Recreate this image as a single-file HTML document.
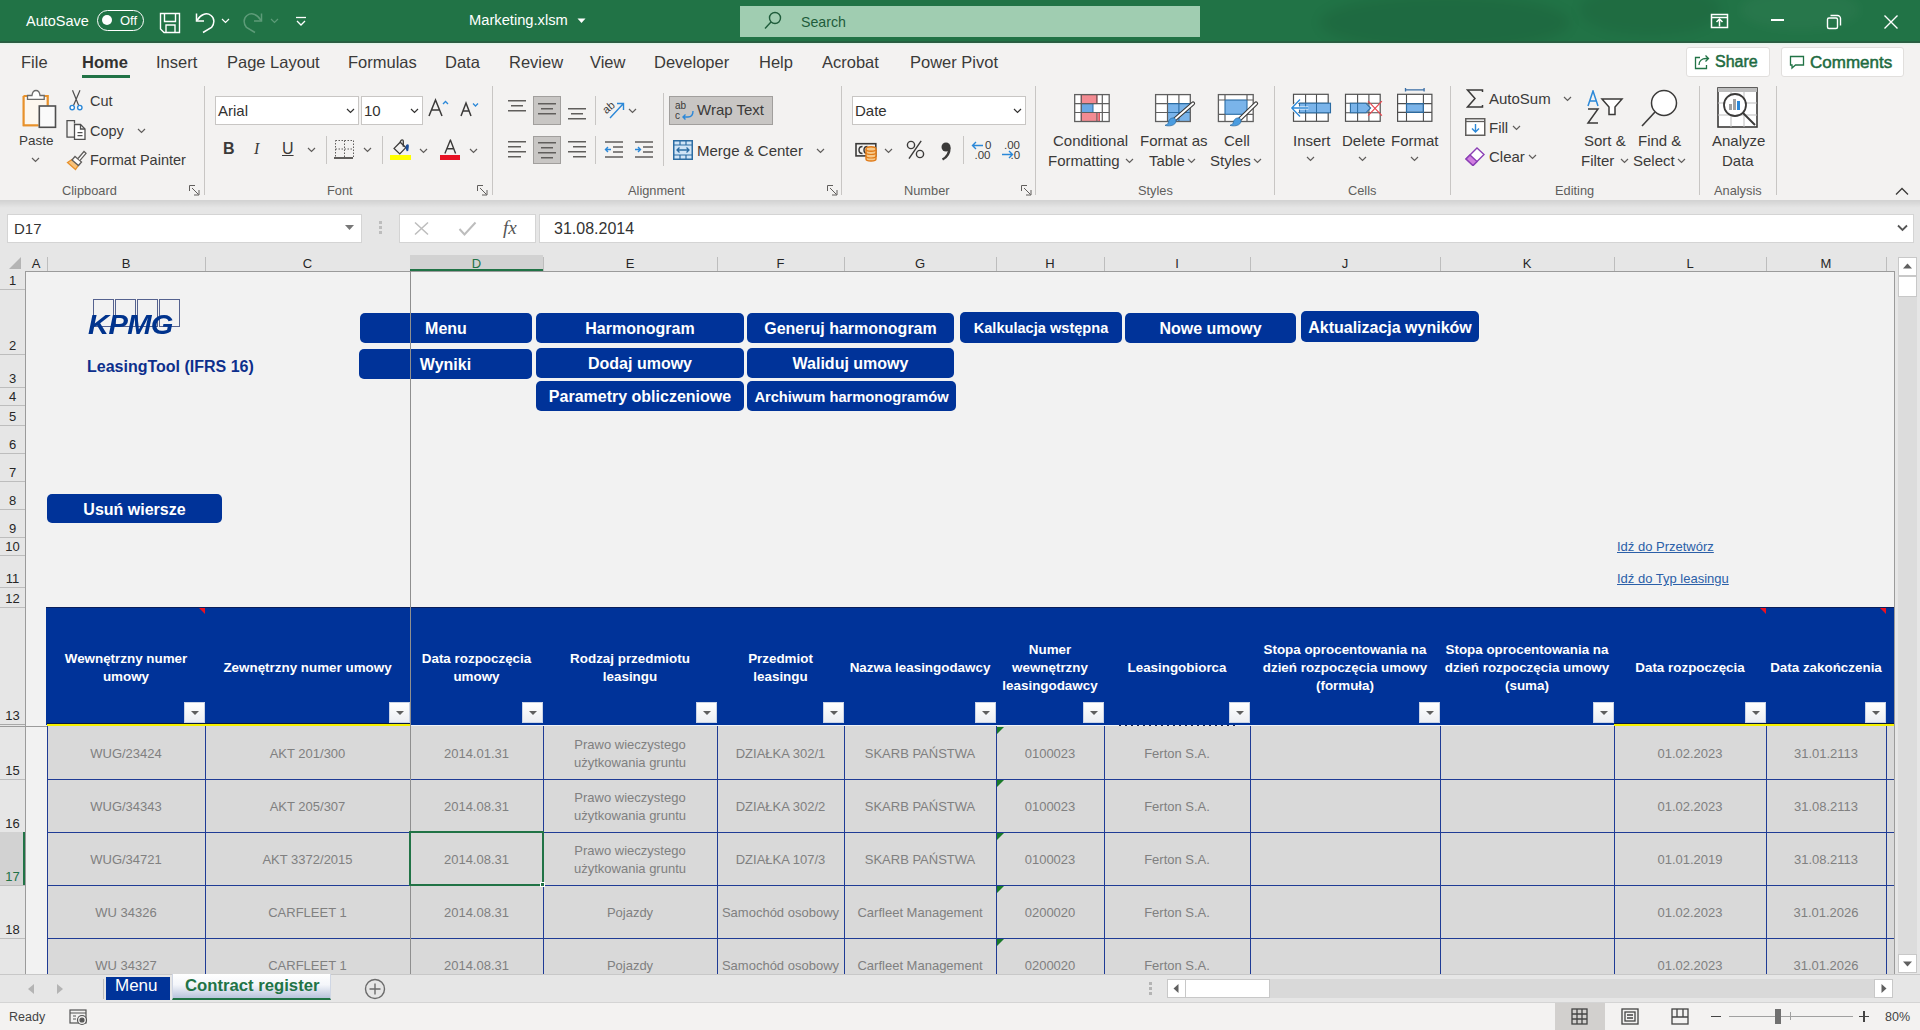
<!DOCTYPE html><html><head><meta charset="utf-8"><style>
*{margin:0;padding:0;box-sizing:border-box}
html,body{width:1920px;height:1030px;overflow:hidden;font-family:"Liberation Sans",sans-serif;background:#f3f2f1;position:relative}
.a{position:absolute}
.t{position:absolute;white-space:nowrap;line-height:1}
.rb{color:#3b3a39;font-size:15px}
.gl{color:#605e5c;font-size:12.8px;margin-top:0.5px}
.sep{position:absolute;width:1px;background:#c8c6c4}
.chev{position:absolute}
.btn{position:absolute;background:#003399;border-radius:5px;color:#fff;font-weight:bold;font-size:16px;display:flex;align-items:center;justify-content:center;white-space:nowrap;padding-top:2.5px}
.hc{position:absolute;color:#fff;font-weight:bold;font-size:13.4px;line-height:18px;text-align:center;display:flex;align-items:center;justify-content:center}
.dc{position:absolute;color:#808080;font-size:13px;line-height:18px;text-align:center;display:flex;align-items:center;justify-content:center;white-space:nowrap}
.flt{position:absolute;width:21px;height:21px;background:linear-gradient(#ffffff,#eceef2);border:1px solid #c9d3e6}
.flt:after{content:"";position:absolute;left:6px;top:8px;border-left:4px solid transparent;border-right:4px solid transparent;border-top:4px solid #5f5f5f}
.colh{position:absolute;top:254.5px;height:18px;font-size:13px;color:#262626;text-align:center;line-height:18px}
.rowh{position:absolute;left:0;width:25px;font-size:13px;color:#262626;text-align:center;display:flex;align-items:flex-end;justify-content:center;padding-bottom:1px}
</style></head><body>
<div class="a" style="left:0;top:0;width:1920px;height:43px;background:#217346;overflow:hidden">
<div class="a" style="left:1320px;top:-5px;width:250px;height:55px;border-radius:50%;background:rgba(0,0,0,0.07);filter:blur(6px)"></div>
<div class="a" style="left:1580px;top:-15px;width:140px;height:50px;border-radius:50%;background:rgba(0,0,0,0.06);filter:blur(6px)"></div>
<div class="a" style="left:1740px;top:-10px;width:120px;height:40px;border-radius:50%;background:rgba(255,255,255,0.03);filter:blur(6px)"></div>
<div class="t" style="left:26px;top:14px;font-size:14.5px;color:#fff">AutoSave</div>
<div class="a" style="left:97px;top:10px;width:47px;height:21px;border:1.5px solid #fff;border-radius:11px"></div>
<div class="a" style="left:102px;top:15px;width:10px;height:10px;background:#fff;border-radius:50%"></div>
<div class="t" style="left:120px;top:14px;font-size:13px;color:#fff">Off</div>
<svg class="a" style="left:158px;top:11px" width="24" height="24" viewBox="0 0 24 24" fill="none" stroke="#fff" stroke-width="1.4"><path d="M2.5 2.5h19v19h-15.5l-3.5-3.5z"/><path d="M6.5 2.5v8h11v-8"/><path d="M8 21.5v-7.5h9v7.5"/></svg>
<svg class="a" style="left:193px;top:10px" width="26" height="26" viewBox="0 0 26 26" fill="none" stroke="#fff" stroke-width="1.5"><path d="M3.5 3.5v7.5h7.5"/><path d="M4 10.5C7 4.5 13.5 2 18 5.5C22 8.5 21.5 14 18.5 17.5L10 22.5"/></svg>
<svg class="a" style="left:221px;top:18px" width="9" height="6" viewBox="0 0 9 6" fill="none" stroke="#fff" stroke-width="1.2"><path d="M1 1l3.5 3.5L8 1"/></svg>
<svg class="a" style="left:239px;top:10px" width="26" height="26" viewBox="0 0 26 26" fill="none" stroke="#5d9b78" stroke-width="1.5"><path d="M22.5 3.5v7.5h-7.5"/><path d="M22 10.5C19 4.5 12.5 2 8 5.5C4 8.5 4.5 14 7.5 17.5L16 22.5"/></svg>
<svg class="a" style="left:270px;top:18px" width="9" height="6" viewBox="0 0 9 6" fill="none" stroke="#5d9b78" stroke-width="1.2"><path d="M1 1l3.5 3.5L8 1"/></svg>
<svg class="a" style="left:294px;top:14px" width="14" height="14" viewBox="0 0 14 14" fill="none" stroke="#fff" stroke-width="1.3"><path d="M2 3.5h10"/><path d="M3 7l4 4 4-4"/></svg>
<div class="t" style="left:469px;top:13px;font-size:14.7px;color:#fff">Marketing.xlsm</div>
<svg class="a" style="left:577px;top:18px" width="9" height="6" viewBox="0 0 9 6"><path d="M0.5 0.5h8l-4 4.5z" fill="#fff"/></svg>
<div class="a" style="left:740px;top:6px;width:460px;height:31px;background:#a0cdb1"></div>
<svg class="a" style="left:763px;top:10px" width="22" height="22" viewBox="0 0 22 22" fill="none" stroke="#1f5c3b" stroke-width="1.4"><circle cx="12" cy="8" r="5.5"/><path d="M8 12l-6 6.5"/></svg>
<div class="t" style="left:801px;top:15px;font-size:14.2px;color:#1f5c3b">Search</div>
<svg class="a" style="left:1709px;top:12px" width="22" height="18" viewBox="0 0 22 18" fill="none" stroke="#fff" stroke-width="1.5"><rect x="2.5" y="2.5" width="16" height="13"/><path d="M2.5 5.5h16"/><path d="M10.5 14.5v-7M7.5 10l3-3 3 3"/></svg>
<div class="a" style="left:1771px;top:19px;width:13px;height:1.5px;background:#fff"></div>
<svg class="a" style="left:1825px;top:13px" width="18" height="18" viewBox="0 0 18 18" fill="none" stroke="#fff" stroke-width="1.4"><rect x="2.5" y="5" width="10" height="10.5" rx="1.5"/><path d="M5.5 2.5h7a3 3 0 0 1 3 3v7"/></svg>
<svg class="a" style="left:1883px;top:14px" width="16" height="16" viewBox="0 0 16 16" fill="none" stroke="#fff" stroke-width="1.4"><path d="M1.5 1.5l13 13M14.5 1.5l-13 13"/></svg>
<div class="a" style="left:0;top:41px;width:1920px;height:1px;background:rgba(40,80,60,0.5)"></div><div class="a" style="left:0;top:42px;width:1920px;height:1px;background:#2d5c43"></div></div>
<div class="a" style="left:0;top:43px;width:1920px;height:1px;background:#e3f5ea"></div><div class="a" style="left:0;top:44px;width:1920px;height:1px;background:#edf3ee"></div>
<div class="t" style="left:21px;top:54px;font-size:16.5px;font-weight:normal;color:#3b3a39">File</div>
<div class="t" style="left:82px;top:54px;font-size:16.5px;font-weight:bold;color:#323130">Home</div>
<div class="t" style="left:156px;top:54px;font-size:16.5px;font-weight:normal;color:#3b3a39">Insert</div>
<div class="t" style="left:227px;top:54px;font-size:16.5px;font-weight:normal;color:#3b3a39">Page Layout</div>
<div class="t" style="left:348px;top:54px;font-size:16.5px;font-weight:normal;color:#3b3a39">Formulas</div>
<div class="t" style="left:445px;top:54px;font-size:16.5px;font-weight:normal;color:#3b3a39">Data</div>
<div class="t" style="left:509px;top:54px;font-size:16.5px;font-weight:normal;color:#3b3a39">Review</div>
<div class="t" style="left:590px;top:54px;font-size:16.5px;font-weight:normal;color:#3b3a39">View</div>
<div class="t" style="left:654px;top:54px;font-size:16.5px;font-weight:normal;color:#3b3a39">Developer</div>
<div class="t" style="left:759px;top:54px;font-size:16.5px;font-weight:normal;color:#3b3a39">Help</div>
<div class="t" style="left:822px;top:54px;font-size:16.5px;font-weight:normal;color:#3b3a39">Acrobat</div>
<div class="t" style="left:910px;top:54px;font-size:16.5px;font-weight:normal;color:#3b3a39">Power Pivot</div>
<div class="a" style="left:82px;top:75px;width:48px;height:3px;background:#217346"></div>
<div class="a" style="left:1686px;top:47px;width:84px;height:30px;background:#fff;border:1px solid #e1dfdd;border-radius:3px"></div>
<svg class="a" style="left:1692px;top:53px" width="20" height="18" viewBox="0 0 20 18" fill="none" stroke="#217346" stroke-width="1.3"><path d="M8 4.5H3.5v11h11V12"/><path d="M7 12c0-4 3-6.5 7-6.5h2M13.5 2.5l3 3-3 3"/></svg>
<div class="t" style="left:1715px;top:54px;font-size:16px;color:#1e6b41;-webkit-text-stroke:0.5px #1e6b41">Share</div>
<div class="a" style="left:1781px;top:47px;width:123px;height:30px;background:#fff;border:1px solid #e1dfdd;border-radius:3px"></div>
<svg class="a" style="left:1787px;top:53px" width="20" height="18" viewBox="0 0 20 18" fill="none" stroke="#217346" stroke-width="1.3"><path d="M3.5 3.5h13v8.5h-8l-3.5 3v-3h-1.5z"/></svg>
<div class="t" style="left:1810px;top:54px;font-size:17px;color:#1e6b41;-webkit-text-stroke:0.5px #1e6b41">Comments</div>
<div class="sep" style="left:204px;top:86px;height:109px"></div>
<div class="sep" style="left:492px;top:86px;height:109px"></div>
<div class="sep" style="left:841px;top:86px;height:109px"></div>
<div class="sep" style="left:1035px;top:86px;height:109px"></div>
<div class="sep" style="left:1274px;top:86px;height:109px"></div>
<div class="sep" style="left:1450px;top:86px;height:109px"></div>
<div class="sep" style="left:1699px;top:86px;height:109px"></div>
<div class="sep" style="left:1776px;top:86px;height:109px"></div>
<svg class="a" style="left:20px;top:88px" width="38" height="42" viewBox="0 0 38 42" fill="none"><path d="M3.7 8h4.5M24 8h3.6v9.5M3.7 8v29.2h14.7" stroke="#e8912a" stroke-width="2"/><rect x="3.7" y="8" width="23.9" height="29.2" fill="#fdf7ee"/><path d="M3.7 8h4.5M24 8h3.6v9.5M3.7 8v29.2h14.7" stroke="#e8912a" stroke-width="2"/><path d="M7.5 11.4V7.5h4.5c0.3-3 1.8-5 4-5s3.7 2 4 5h4.2v3.9z" fill="#fff" stroke="#6b6b6b" stroke-width="1.3"/><rect x="19.3" y="18" width="16.2" height="21.3" fill="#fafafa" stroke="#4f4f4f" stroke-width="1.6"/></svg>
<div class="t rb" style="left:19px;top:134px;font-size:13.5px">Paste</div>
<svg class="a" style="left:31px;top:157px" width="9" height="6" viewBox="0 0 9 6" fill="none" stroke="#605e5c" stroke-width="1.2"><path d="M1 1l3.5 3.5L8 1"/></svg>
<svg class="a" style="left:68px;top:89px" width="18" height="22" viewBox="0 0 18 22" fill="none"><path d="M4.5 1.2L10.6 16.2M12 1.2L5.6 16.2" stroke="#4f4f4f" stroke-width="1.2"/><circle cx="4.2" cy="18.6" r="2.2" fill="#fff" stroke="#2b88d8" stroke-width="1.4"/><circle cx="11.8" cy="18.6" r="2.2" fill="#fff" stroke="#2b88d8" stroke-width="1.4"/></svg>
<div class="t rb" style="left:90px;top:94px;font-size:14.5px">Cut</div>
<svg class="a" style="left:65px;top:119px" width="22" height="22" viewBox="0 0 22 22" fill="none" stroke="#4f4f4f" stroke-width="1.3"><path d="M9.5 4.5V1.6H2v16.6h7" fill="none"/><path d="M9.5 5.5h6l4.5 4.5v10.3H9.5z" fill="#fff"/><path d="M15.5 5.5v4.5h4.5M12.5 13.6h5M12.5 16.7h5"/></svg>
<div class="t rb" style="left:90px;top:124px;font-size:14.5px">Copy</div>
<svg class="a" style="left:137px;top:128px" width="9" height="6" viewBox="0 0 9 6" fill="none" stroke="#605e5c" stroke-width="1.2"><path d="M1 1l3.5 3.5L8 1"/></svg>
<svg class="a" style="left:66px;top:149px" width="22" height="22" viewBox="0 0 22 22" fill="none"><path d="M1.5 13.5l8 7 3-4.5-6.5-5.5z" fill="#f8c27a" stroke="#e8912a" stroke-width="1.3"/><path d="M6 11l6.5 5.5 3-3.5-6.5-5.5z" fill="#fff" stroke="#605e5c" stroke-width="1.3"/><path d="M12 9.5l6-7 2 1.8-6 7" fill="#fff" stroke="#605e5c" stroke-width="1.3"/></svg>
<div class="t rb" style="left:90px;top:153px;font-size:14.5px">Format Painter</div>
<div class="t gl" style="left:62px;top:184px;">Clipboard</div>
<svg class="a" style="left:189px;top:185px" width="11" height="11" viewBox="0 0 11 11" fill="none" stroke="#605e5c" stroke-width="1"><path d="M0.5 6V0.5H6"/><path d="M3 3l6.5 6.5M5 10h5V5"/></svg>
<div class="a" style="left:215px;top:96px;width:144px;height:29px;background:#fff;border:1px solid #c8c6c4"></div>
<div class="t rb" style="left:218px;top:103px;font-size:15px;color:#323130">Arial</div>
<svg class="a" style="left:346px;top:108px" width="9" height="6" viewBox="0 0 9 6" fill="none" stroke="#323130" stroke-width="1.2"><path d="M1 1l3.5 3.5L8 1"/></svg>
<div class="a" style="left:361px;top:96px;width:62px;height:29px;background:#fff;border:1px solid #c8c6c4"></div>
<div class="t rb" style="left:364px;top:103px;font-size:15px;color:#323130">10</div>
<svg class="a" style="left:410px;top:108px" width="9" height="6" viewBox="0 0 9 6" fill="none" stroke="#323130" stroke-width="1.2"><path d="M1 1l3.5 3.5L8 1"/></svg>
<svg class="a" style="left:428px;top:98px" width="22" height="20" viewBox="0 0 22 20" fill="none"><path d="M1 18L7.5 2 14 18M3.5 12h8" stroke="#3b3a39" stroke-width="1.5"/><path d="M15 6l2.5-2.5L20 6" stroke="#2b88d8" stroke-width="1.3"/></svg>
<svg class="a" style="left:460px;top:100px" width="22" height="18" viewBox="0 0 22 18" fill="none"><path d="M1 16L6 3l5 13M3 11h6" stroke="#3b3a39" stroke-width="1.5"/><path d="M13 3.5l2.5 2.5 2.5-2.5" stroke="#2b88d8" stroke-width="1.3"/></svg>
<div class="t rb" style="left:223px;top:141px;font-size:16px;font-weight:bold;color:#3b3a39">B</div>
<div class="t rb" style="left:254px;top:141px;font-size:16px;font-style:italic;font-family:'Liberation Serif';color:#3b3a39">I</div>
<div class="t rb" style="left:282px;top:141px;font-size:16px;color:#3b3a39;text-decoration:underline">U</div>
<svg class="a" style="left:307px;top:147px" width="9" height="6" viewBox="0 0 9 6" fill="none" stroke="#605e5c" stroke-width="1.2"><path d="M1 1l3.5 3.5L8 1"/></svg>
<div class="sep" style="left:326px;top:136px;height:28px"></div>
<svg class="a" style="left:334px;top:139px" width="21" height="20" viewBox="0 0 21 20" fill="none" stroke="#605e5c" stroke-width="1" stroke-dasharray="1.5 1.5"><rect x="1.5" y="1.5" width="18" height="17"/><path d="M10.5 1.5v17M1.5 10h18"/></svg>
<div class="a" style="left:334px;top:157px;width:19px;height:2px;background:#605e5c"></div>
<svg class="a" style="left:363px;top:147px" width="9" height="6" viewBox="0 0 9 6" fill="none" stroke="#605e5c" stroke-width="1.2"><path d="M1 1l3.5 3.5L8 1"/></svg>
<div class="sep" style="left:382px;top:136px;height:28px"></div>
<svg class="a" style="left:390px;top:138px" width="24" height="22" viewBox="0 0 24 22" fill="none"><path d="M4.1 10.4L10.2 4.2 15.8 9.6 9.8 15.9z" stroke="#3b3a39" stroke-width="1.3" stroke-linejoin="miter"/><path d="M10.2 4.2C11 1.5 13.3 1 13.3 3.5V8.7" stroke="#3b3a39" stroke-width="1.3"/><path d="M15.6 8.5c0.3-1.5 1.3-2.3 2.2-2.2 0.9 0.2 1.2 1.2 1 2.6l-0.6 4.2-1.5 0.2c-0.6-1.6-1.3-3.2-1.1-4.8z" fill="#1e4e9a"/></svg>
<div class="a" style="left:390px;top:155px;width:21px;height:5px;background:#ffff00"></div>
<svg class="a" style="left:419px;top:148px" width="9" height="6" viewBox="0 0 9 6" fill="none" stroke="#605e5c" stroke-width="1.2"><path d="M1 1l3.5 3.5L8 1"/></svg>
<svg class="a" style="left:440px;top:138px" width="22" height="18" viewBox="0 0 22 18" fill="none" stroke="#3b3a39" stroke-width="1.4" stroke-linejoin="round"><path d="M4.9 15.6L10.4 2l5.2 13.6M6.8 10.7h7.1"/></svg>
<div class="a" style="left:440px;top:155px;width:20px;height:5px;background:#e81123"></div>
<svg class="a" style="left:469px;top:148px" width="9" height="6" viewBox="0 0 9 6" fill="none" stroke="#605e5c" stroke-width="1.2"><path d="M1 1l3.5 3.5L8 1"/></svg>
<div class="t gl" style="left:327px;top:184px;">Font</div>
<svg class="a" style="left:477px;top:185px" width="11" height="11" viewBox="0 0 11 11" fill="none" stroke="#605e5c" stroke-width="1"><path d="M0.5 6V0.5H6"/><path d="M3 3l6.5 6.5M5 10h5V5"/></svg>
<svg class="a" style="left:508px;top:100px" width="22" height="22" viewBox="0 0 22 22"><rect x="0" y="0" width="18" height="1.5" fill="#605e5c"/><rect x="3" y="5" width="12" height="1.5" fill="#605e5c"/><rect x="0" y="10" width="18" height="1.5" fill="#605e5c"/></svg>
<div class="a" style="left:533px;top:96px;width:28px;height:29px;background:#c8c6c4;border:1px solid #a19f9d"></div>
<svg class="a" style="left:538px;top:103px" width="22" height="22" viewBox="0 0 22 22"><rect x="0" y="0" width="18" height="1.5" fill="#605e5c"/><rect x="3" y="5" width="12" height="1.5" fill="#605e5c"/><rect x="0" y="10" width="18" height="1.5" fill="#605e5c"/></svg>
<svg class="a" style="left:568px;top:108px" width="22" height="22" viewBox="0 0 22 22"><rect x="0" y="0" width="18" height="1.5" fill="#605e5c"/><rect x="3" y="5" width="12" height="1.5" fill="#605e5c"/><rect x="0" y="10" width="18" height="1.5" fill="#605e5c"/></svg>
<div class="sep" style="left:595px;top:96px;height:29px"></div>
<svg class="a" style="left:603px;top:98px" width="24" height="22" viewBox="0 0 24 22" fill="none"><text x="0" y="13" font-size="11" font-family="Liberation Sans" fill="#3b3a39" transform="rotate(-40 6 10)">ab</text><path d="M7 20L20 6M14 5.5h6.5v6.5" stroke="#2b88d8" stroke-width="1.4"/></svg>
<svg class="a" style="left:628px;top:108px" width="9" height="6" viewBox="0 0 9 6" fill="none" stroke="#605e5c" stroke-width="1.2"><path d="M1 1l3.5 3.5L8 1"/></svg>
<div class="sep" style="left:663px;top:93px;height:73px"></div>
<svg class="a" style="left:508px;top:141px" width="22" height="22" viewBox="0 0 22 22"><rect x="0" y="0" width="18" height="1.5" fill="#605e5c"/><rect x="0" y="5" width="13" height="1.5" fill="#605e5c"/><rect x="0" y="10" width="18" height="1.5" fill="#605e5c"/><rect x="0" y="15" width="13" height="1.5" fill="#605e5c"/></svg>
<div class="a" style="left:533px;top:136px;width:28px;height:28px;background:#c8c6c4;border:1px solid #a19f9d"></div>
<svg class="a" style="left:538px;top:142px" width="22" height="22" viewBox="0 0 22 22"><rect x="0" y="0" width="18" height="1.5" fill="#605e5c"/><rect x="3" y="5" width="12" height="1.5" fill="#605e5c"/><rect x="0" y="10" width="18" height="1.5" fill="#605e5c"/><rect x="3" y="15" width="12" height="1.5" fill="#605e5c"/></svg>
<svg class="a" style="left:568px;top:141px" width="22" height="22" viewBox="0 0 22 22"><rect x="0" y="0" width="18" height="1.5" fill="#605e5c"/><rect x="5" y="5" width="13" height="1.5" fill="#605e5c"/><rect x="0" y="10" width="18" height="1.5" fill="#605e5c"/><rect x="5" y="15" width="13" height="1.5" fill="#605e5c"/></svg>
<div class="sep" style="left:595px;top:136px;height:28px"></div>
<svg class="a" style="left:604px;top:141px" width="20" height="18" viewBox="0 0 20 18" fill="none"><path d="M1 1h18M9 6h10M9 11h10M1 16h18" stroke="#605e5c" stroke-width="1.5"/><path d="M7 8.5H1.5M4 6l-2.5 2.5L4 11" stroke="#2b88d8" stroke-width="1.4"/></svg>
<svg class="a" style="left:634px;top:141px" width="20" height="18" viewBox="0 0 20 18" fill="none"><path d="M1 1h18M9 6h10M9 11h10M1 16h18" stroke="#605e5c" stroke-width="1.5"/><path d="M1 8.5h5.5M4 6l2.5 2.5L4 11" stroke="#2b88d8" stroke-width="1.4"/></svg>
<div class="a" style="left:669px;top:96px;width:104px;height:29px;background:#c8c6c4;border:1px solid #a19f9d"></div>
<svg class="a" style="left:675px;top:100px" width="22" height="22" viewBox="0 0 22 22" fill="none"><text x="0" y="9" font-size="10" font-family="Liberation Sans" fill="#3b3a39">ab</text><text x="0" y="19" font-size="10" font-family="Liberation Sans" fill="#3b3a39">c</text><path d="M18 11c0 4-2 6-5 6H8M10.5 14.5L8 17l2.5 2.5" stroke="#2b88d8" stroke-width="1.4"/></svg>
<div class="t rb" style="left:697px;top:102px;">Wrap Text</div>
<svg class="a" style="left:673px;top:140px" width="20" height="20" viewBox="0 0 20 20" fill="none"><rect x="0.75" y="0.75" width="18.5" height="18.5" fill="#cfe4f7" stroke="#2b6ca3" stroke-width="1.5"/><path d="M1 5h18M1 15h18M7 1v4M13 1v4M7 15v4M13 15v4" stroke="#2b6ca3" stroke-width="1.2"/><path d="M4 10h12M6.5 7.5L4 10l2.5 2.5M13.5 7.5L16 10l-2.5 2.5" stroke="#2b6ca3" stroke-width="1.3"/></svg>
<div class="t rb" style="left:697px;top:143px;">Merge &amp; Center</div>
<svg class="a" style="left:816px;top:148px" width="9" height="6" viewBox="0 0 9 6" fill="none" stroke="#605e5c" stroke-width="1.2"><path d="M1 1l3.5 3.5L8 1"/></svg>
<div class="t gl" style="left:628px;top:184px;">Alignment</div>
<svg class="a" style="left:827px;top:185px" width="11" height="11" viewBox="0 0 11 11" fill="none" stroke="#605e5c" stroke-width="1"><path d="M0.5 6V0.5H6"/><path d="M3 3l6.5 6.5M5 10h5V5"/></svg>
<div class="a" style="left:852px;top:96px;width:174px;height:29px;background:#fff;border:1px solid #c8c6c4"></div>
<div class="t rb" style="left:855px;top:103px;font-size:15px;color:#323130">Date</div>
<svg class="a" style="left:1013px;top:108px" width="9" height="6" viewBox="0 0 9 6" fill="none" stroke="#323130" stroke-width="1.2"><path d="M1 1l3.5 3.5L8 1"/></svg>
<svg class="a" style="left:854px;top:141px" width="26" height="22" viewBox="0 0 26 22" fill="none"><rect x="2" y="2.7" width="19.8" height="12.2" stroke="#3b3a39" stroke-width="1.6"/><path d="M8.5 5.5c-2.5 0-3.5 1.5-3.5 3.5s1 3.5 3.5 3.5M13.5 5.5c-2.5 0-3.5 1.5-3.5 3.5s1 3.5 3.5 3.5" stroke="#3b3a39" stroke-width="1.5"/><path d="M12 8v10c0 1.3 2 2 5 2s5-0.7 5-2V8" fill="#f7c98a" stroke="#e07b18" stroke-width="1.4"/><ellipse cx="17" cy="8" rx="5" ry="2.2" fill="#f7c98a" stroke="#e07b18" stroke-width="1.4"/><path d="M12 11.5c0 1.3 2 2 5 2s5-0.7 5-2M12 15c0 1.3 2 2 5 2s5-0.7 5-2" stroke="#e07b18" stroke-width="1.2"/></svg>
<svg class="a" style="left:884px;top:148px" width="9" height="6" viewBox="0 0 9 6" fill="none" stroke="#605e5c" stroke-width="1.2"><path d="M1 1l3.5 3.5L8 1"/></svg>
<svg class="a" style="left:903px;top:139px" width="24" height="22" viewBox="0 0 24 22" fill="none" stroke="#3b3a39" stroke-width="1.4"><circle cx="8" cy="6" r="3.6"/><circle cx="17" cy="15" r="3.6"/><path d="M18.2 1.9L6 19.7"/></svg>
<svg class="a" style="left:939px;top:141px" width="14" height="22" viewBox="0 0 14 22"><circle cx="7" cy="6" r="4.5" fill="#3b3a39"/><path d="M10.5 6.5c0 6-3 10-7 12" stroke="#3b3a39" stroke-width="2.5" fill="none"/></svg>
<div class="sep" style="left:963px;top:136px;height:28px"></div>
<svg class="a" style="left:970px;top:138px" width="24" height="24" viewBox="0 0 24 24" fill="none"><path d="M13 7.5H2.5M6 4L2.5 7.5 6 11" stroke="#2b88d8" stroke-width="1.4"/><text x="15" y="10.5" font-size="11.5" font-family="Liberation Sans" fill="#3b3a39">0</text><text x="4.5" y="20.7" font-size="11.5" font-family="Liberation Sans" fill="#3b3a39">.00</text></svg>
<svg class="a" style="left:1000px;top:138px" width="24" height="24" viewBox="0 0 24 24" fill="none"><text x="4" y="10.5" font-size="11.5" font-family="Liberation Sans" fill="#3b3a39">.00</text><path d="M2 16.5h10.5M9 13l3.5 3.5L9 20" stroke="#2b88d8" stroke-width="1.4"/><text x="10.5" y="20.7" font-size="11.5" font-family="Liberation Sans" fill="#3b3a39">.0</text></svg>
<div class="t gl" style="left:904px;top:184px;">Number</div>
<svg class="a" style="left:1021px;top:185px" width="11" height="11" viewBox="0 0 11 11" fill="none" stroke="#605e5c" stroke-width="1"><path d="M0.5 6V0.5H6"/><path d="M3 3l6.5 6.5M5 10h5V5"/></svg>
<svg class="a" style="left:1073px;top:93px" width="40" height="32" viewBox="0 0 40 32" fill="none"><rect x="1.7" y="1.6" width="34.5" height="26.9" fill="#fff"/><rect x="8.3" y="1.6" width="15.6" height="9" fill="#f38b92" stroke="#d63440" stroke-width="1"/><rect x="8.3" y="10.6" width="11.7" height="8.9" fill="#6aa8e4" stroke="#2b6ca3" stroke-width="1"/><rect x="8.3" y="19.5" width="18" height="9" fill="#f38b92" stroke="#d63440" stroke-width="1"/><rect x="1.7" y="1.6" width="34.5" height="26.9" stroke="#5f5f5f" stroke-width="1.3"/><path d="M1.7 10.6h34.5M1.7 19.5h34.5M8.3 1.6v26.9M29.3 1.6v26.9" stroke="#5f5f5f" stroke-width="1.2"/><path d="M23.9 1.6v9M23.9 19.5v9" stroke="#5f5f5f" stroke-width="1"/></svg>
<div class="t rb" style="left:1053px;top:133px;">Conditional</div>
<div class="t rb" style="left:1048px;top:153px;">Formatting</div>
<svg class="a" style="left:1125px;top:158px" width="9" height="6" viewBox="0 0 9 6" fill="none" stroke="#605e5c" stroke-width="1.2"><path d="M1 1l3.5 3.5L8 1"/></svg>
<svg class="a" style="left:1154px;top:93px" width="42" height="34" viewBox="0 0 42 34" fill="none"><rect x="1.6" y="1.6" width="34.7" height="26.9" fill="#fff"/><rect x="13.5" y="10.6" width="22.8" height="17.9" fill="#7ab4ea"/><path d="M13.5 10.6h22.8M13.5 19.5h22.8M24.9 10.6v17.9" stroke="#2b6ca3" stroke-width="1.1"/><path d="M1.6 10.6h12M1.6 19.5h12M13.5 1.6v26.9M24.9 1.6v9" stroke="#5f5f5f" stroke-width="1.2"/><rect x="1.6" y="1.6" width="34.7" height="26.9" stroke="#5f5f5f" stroke-width="1.3"/><path d="M39 10.5L20 27" stroke="#3b3a39" stroke-width="4.2" stroke-linecap="round"/><path d="M39 10.5L20 27" stroke="#fff" stroke-width="2" stroke-linecap="round"/><path d="M21 25.5c-3-1.5-6 0.5-6.5 3.5c-0.3 2-2 3-3.5 3.3c4 1.2 9 0.5 10.5-2.5c0.8-1.5 0.5-3-0.5-4.3z" fill="#4a9ce0" stroke="#2b6ca3" stroke-width="0.8"/></svg>
<div class="t rb" style="left:1140px;top:133px;">Format as</div>
<div class="t rb" style="left:1149px;top:153px;">Table</div>
<svg class="a" style="left:1187px;top:158px" width="9" height="6" viewBox="0 0 9 6" fill="none" stroke="#605e5c" stroke-width="1.2"><path d="M1 1l3.5 3.5L8 1"/></svg>
<svg class="a" style="left:1217px;top:93px" width="42" height="34" viewBox="0 0 42 34" fill="none"><rect x="1.4" y="1.6" width="34.8" height="26.9" fill="#fff"/><rect x="8" y="7" width="22" height="14.3" fill="#7ab4ea" stroke="#2b6ca3" stroke-width="1.1"/><path d="M1.4 7h6.6M30 7h6.2M1.4 21.3h6.6M30 21.3h6.2M8 1.6v5.4M8 21.3v7.2M30 1.6v5.4M30 21.3v7.2" stroke="#5f5f5f" stroke-width="1.2"/><rect x="1.4" y="1.6" width="34.8" height="26.9" stroke="#5f5f5f" stroke-width="1.3"/><path d="M39 10.5L22 27" stroke="#3b3a39" stroke-width="4.2" stroke-linecap="round"/><path d="M39 10.5L22 27" stroke="#fff" stroke-width="2" stroke-linecap="round"/><path d="M23 25.5c-3-1.5-6 0.5-6.5 3.5c-0.3 2-2 3-3.5 3.3c4 1.2 9 0.5 10.5-2.5c0.8-1.5 0.5-3-0.5-4.3z" fill="#4a9ce0" stroke="#2b6ca3" stroke-width="0.8"/></svg>
<div class="t rb" style="left:1224px;top:133px;">Cell</div>
<div class="t rb" style="left:1210px;top:153px;">Styles</div>
<svg class="a" style="left:1253px;top:158px" width="9" height="6" viewBox="0 0 9 6" fill="none" stroke="#605e5c" stroke-width="1.2"><path d="M1 1l3.5 3.5L8 1"/></svg>
<div class="t gl" style="left:1138px;top:184px;">Styles</div>
<svg class="a" style="left:1290px;top:93px" width="42" height="30" viewBox="0 0 42 30" fill="none"><rect x="3.5" y="1.3" width="34.7" height="27" fill="#fff" stroke="#4f4f4f" stroke-width="1.2"/><path d="M3.5 10.2h34.7M3.5 19.8h34.7M15.6 1.3v27M26.5 1.3v27" stroke="#4f4f4f" stroke-width="1.1"/><rect x="9.5" y="10.2" width="31" height="9.6" fill="#7ab4ea" stroke="#2b6ca3" stroke-width="1.1"/><path d="M26.5 10.2v9.6M15.6 10.2v9.6" stroke="#2b6ca3" stroke-width="1"/><path d="M18.4 15H2M10 6.5L1.8 15l8.2 8.5" stroke="#fff" stroke-width="3"/><path d="M18.4 15H2M10 6.5L1.8 15l8.2 8.5" stroke="#2b88d8" stroke-width="1.3"/></svg>
<div class="t rb" style="left:1293px;top:133px;">Insert</div>
<svg class="a" style="left:1306px;top:156px" width="9" height="6" viewBox="0 0 9 6" fill="none" stroke="#605e5c" stroke-width="1.2"><path d="M1 1l3.5 3.5L8 1"/></svg>
<svg class="a" style="left:1344px;top:93px" width="40" height="30" viewBox="0 0 40 30" fill="none"><rect x="1.5" y="1.3" width="34.7" height="27" fill="#fff" stroke="#4f4f4f" stroke-width="1.2"/><path d="M1.5 10.2h34.7M1.5 19.8h34.7M13.6 1.3v27M24.9 1.3v27" stroke="#4f4f4f" stroke-width="1.1"/><path d="M6.4 10.2h15.5l4.7 4.8-4.7 4.8H6.4z" fill="#7ab4ea" stroke="#2b6ca3" stroke-width="1.1"/><path d="M13.6 10.2v9.6" stroke="#2b6ca3" stroke-width="1"/><path d="M24.1 8.1l13.8 14.6M37.9 8.1L24.1 22.7" stroke="#e8474f" stroke-width="1.2"/></svg>
<div class="t rb" style="left:1342px;top:133px;">Delete</div>
<svg class="a" style="left:1358px;top:156px" width="9" height="6" viewBox="0 0 9 6" fill="none" stroke="#605e5c" stroke-width="1.2"><path d="M1 1l3.5 3.5L8 1"/></svg>
<svg class="a" style="left:1396px;top:86px" width="38" height="38" viewBox="0 0 38 38" fill="none"><path d="M9 3.8h19.6M9.5 2v3.6M28.1 2v3.6" stroke="#3a6ea5" stroke-width="1.3"/><rect x="1.6" y="8.3" width="34.3" height="27" fill="#fff" stroke="#4f4f4f" stroke-width="1.2"/><rect x="10.5" y="17.6" width="16.9" height="8.8" fill="#7ab4ea"/><path d="M1.6 17.6h34.3M1.6 26.4h34.3M10.5 8.3v27M27.4 8.3v27" stroke="#4f4f4f" stroke-width="1.1"/><rect x="10.5" y="17.6" width="16.9" height="8.8" stroke="#2b6ca3" stroke-width="1.1"/></svg>
<div class="t rb" style="left:1391px;top:133px;">Format</div>
<svg class="a" style="left:1410px;top:156px" width="9" height="6" viewBox="0 0 9 6" fill="none" stroke="#605e5c" stroke-width="1.2"><path d="M1 1l3.5 3.5L8 1"/></svg>
<div class="t gl" style="left:1348px;top:184px;">Cells</div>
<svg class="a" style="left:1466px;top:89px" width="18" height="19" viewBox="0 0 18 19" fill="none" stroke="#3b3a39" stroke-width="1.5"><path d="M16.5 3V1H1.5l7.5 8.5L1.5 18h15v-2"/></svg>
<div class="t rb" style="left:1489px;top:91px;">AutoSum</div>
<svg class="a" style="left:1563px;top:96px" width="9" height="6" viewBox="0 0 9 6" fill="none" stroke="#605e5c" stroke-width="1.2"><path d="M1 1l3.5 3.5L8 1"/></svg>
<svg class="a" style="left:1465px;top:118px" width="21" height="18" viewBox="0 0 21 18" fill="none"><rect x="0.75" y="0.75" width="19" height="16.5" fill="#fff" stroke="#605e5c" stroke-width="1.5"/><path d="M1 3.5h19" stroke="#605e5c" stroke-width="1.3"/><path d="M10.5 6v8M7 10.5l3.5 3.5 3.5-3.5" stroke="#2b88d8" stroke-width="1.4"/></svg>
<div class="t rb" style="left:1489px;top:120px;">Fill</div>
<svg class="a" style="left:1512px;top:125px" width="9" height="6" viewBox="0 0 9 6" fill="none" stroke="#605e5c" stroke-width="1.2"><path d="M1 1l3.5 3.5L8 1"/></svg>
<svg class="a" style="left:1465px;top:146px" width="20" height="20" viewBox="0 0 20 20" fill="none"><path d="M1 13l11-11 7 6.5-11 11z" fill="#fff" stroke="#8b3fb5" stroke-width="1.4"/><path d="M1 13l4-4 7 6.5-4 4z" fill="#d17ee0" stroke="#8b3fb5" stroke-width="1.4"/></svg>
<div class="t rb" style="left:1489px;top:149px;">Clear</div>
<svg class="a" style="left:1528px;top:154px" width="9" height="6" viewBox="0 0 9 6" fill="none" stroke="#605e5c" stroke-width="1.2"><path d="M1 1l3.5 3.5L8 1"/></svg>
<svg class="a" style="left:1585px;top:90px" width="40" height="36" viewBox="0 0 40 36" fill="none"><path d="M3 16L8 1l5 15M4.5 11h7" stroke="#2b88d8" stroke-width="1.5"/><path d="M3 19h10L3 33h10" stroke="#3b3a39" stroke-width="1.5"/><path d="M17 9h20l-7 8v7.5h-6V17z" fill="#fff" stroke="#3b3a39" stroke-width="1.5"/></svg>
<div class="t rb" style="left:1584px;top:133px;">Sort &amp;</div>
<div class="t rb" style="left:1581px;top:153px;">Filter</div>
<svg class="a" style="left:1620px;top:158px" width="9" height="6" viewBox="0 0 9 6" fill="none" stroke="#605e5c" stroke-width="1.2"><path d="M1 1l3.5 3.5L8 1"/></svg>
<svg class="a" style="left:1640px;top:89px" width="38" height="40" viewBox="0 0 38 40" fill="none"><circle cx="24" cy="14" r="12.5" fill="#fff" stroke="#3b3a39" stroke-width="1.5"/><path d="M15 23L2 37" stroke="#3b3a39" stroke-width="1.6"/></svg>
<div class="t rb" style="left:1638px;top:133px;">Find &amp;</div>
<div class="t rb" style="left:1633px;top:153px;">Select</div>
<svg class="a" style="left:1677px;top:158px" width="9" height="6" viewBox="0 0 9 6" fill="none" stroke="#605e5c" stroke-width="1.2"><path d="M1 1l3.5 3.5L8 1"/></svg>
<div class="t gl" style="left:1555px;top:184px;">Editing</div>
<svg class="a" style="left:1717px;top:87px" width="42" height="42" viewBox="0 0 42 42" fill="none"><rect x="1" y="1" width="39" height="39" fill="#fff" stroke="#3b3a39" stroke-width="1.6"/><rect x="1" y="1" width="39" height="4" fill="#bdbdbd"/><path d="M1 28h39M14 5v35M27 5v35M1 16h39" stroke="#bdbdbd" stroke-width="1"/><circle cx="18" cy="18" r="11" fill="#fff" stroke="#3b3a39" stroke-width="1.8"/><rect x="12" y="17" width="3" height="6" fill="#a0a0a0"/><rect x="16" y="12" width="3" height="11" fill="#a0a0a0"/><rect x="20" y="14" width="3" height="9" fill="#2b88d8"/><path d="M26 26l12 12" stroke="#3b3a39" stroke-width="2"/></svg>
<div class="t rb" style="left:1712px;top:133px;">Analyze</div>
<div class="t rb" style="left:1722px;top:153px;">Data</div>
<div class="t gl" style="left:1714px;top:184px;">Analysis</div>
<svg class="a" style="left:1895px;top:187px" width="14" height="9" viewBox="0 0 14 9" fill="none" stroke="#3b3a39" stroke-width="1.3"><path d="M1 7.5l6-6 6 6"/></svg>
<div class="a" style="left:0;top:200px;width:1920px;height:53px;background:#e6e6e6"></div>
<div class="a" style="left:0;top:200px;width:1920px;height:8px;background:linear-gradient(rgba(0,0,0,0.09),rgba(0,0,0,0))"></div>
<div class="a" style="left:7px;top:214px;width:355px;height:29px;background:#fff;border:1px solid #d4d4d4"></div>
<div class="t" style="left:14px;top:221px;font-size:15px;color:#333">D17</div>
<svg class="a" style="left:345px;top:225px" width="9" height="5" viewBox="0 0 9 5"><path d="M0 0h9l-4.5 5z" fill="#777"/></svg>
<div class="a" style="left:379px;top:221px;width:3px;height:3px;background:#bdbdbd"></div>
<div class="a" style="left:379px;top:226px;width:3px;height:3px;background:#bdbdbd"></div>
<div class="a" style="left:379px;top:231px;width:3px;height:3px;background:#bdbdbd"></div>
<div class="a" style="left:399px;top:214px;width:137px;height:29px;background:#fff;border:1px solid #d4d4d4"></div>
<svg class="a" style="left:413px;top:221px" width="17" height="15" viewBox="0 0 17 15" fill="none" stroke="#bdbdbd" stroke-width="1.5"><path d="M2 1.5l13 12M15 1.5l-13 12"/></svg>
<svg class="a" style="left:458px;top:221px" width="19" height="15" viewBox="0 0 19 15" fill="none" stroke="#bdbdbd" stroke-width="2"><path d="M1.5 8l5 5.5L17.5 1.5"/></svg>
<div class="t" style="left:503px;top:218px;font-size:19px;font-style:italic;font-family:'Liberation Serif',serif;color:#555">fx</div>
<div class="a" style="left:539px;top:214px;width:1375px;height:29px;background:#fff;border:1px solid #d4d4d4"></div>
<div class="t" style="left:554px;top:221px;font-size:16px;color:#333">31.08.2014</div>
<svg class="a" style="left:1897px;top:224px" width="11" height="8" viewBox="0 0 11 8" fill="none" stroke="#555" stroke-width="1.8"><path d="M1 1.5l4.5 4.5 4.5-4.5"/></svg>

<div class="a" style="left:0;top:253px;width:1895px;height:18px;background:#e6e6e6"></div>
<div class="a" style="left:0;top:271px;width:1894px;height:703px;background:#f2f2f2;overflow:hidden" id="sh">
</div>
<svg class="a" style="left:9px;top:257px" width="13" height="12" viewBox="0 0 13 12"><path d="M12 0v12H0z" fill="#b4b4b4"/></svg>
<div class="colh" style="left:25px;width:22px;color:#262626">A</div>
<div class="a" style="left:47px;top:257px;width:1px;height:14px;background:#bdbdbd"></div>
<div class="colh" style="left:47px;width:158px;color:#262626">B</div>
<div class="a" style="left:205px;top:257px;width:1px;height:14px;background:#bdbdbd"></div>
<div class="colh" style="left:205px;width:205px;color:#262626">C</div>
<div class="a" style="left:410px;top:257px;width:1px;height:14px;background:#bdbdbd"></div>
<div class="a" style="left:410px;top:255px;width:133px;height:16px;background:#d2d2d2"></div>
<div class="a" style="left:410px;top:269px;width:133px;height:2px;background:#217346"></div>
<div class="colh" style="left:410px;width:133px;color:#217346">D</div>
<div class="a" style="left:543px;top:257px;width:1px;height:14px;background:#bdbdbd"></div>
<div class="colh" style="left:543px;width:174px;color:#262626">E</div>
<div class="a" style="left:717px;top:257px;width:1px;height:14px;background:#bdbdbd"></div>
<div class="colh" style="left:717px;width:127px;color:#262626">F</div>
<div class="a" style="left:844px;top:257px;width:1px;height:14px;background:#bdbdbd"></div>
<div class="colh" style="left:844px;width:152px;color:#262626">G</div>
<div class="a" style="left:996px;top:257px;width:1px;height:14px;background:#bdbdbd"></div>
<div class="colh" style="left:996px;width:108px;color:#262626">H</div>
<div class="a" style="left:1104px;top:257px;width:1px;height:14px;background:#bdbdbd"></div>
<div class="colh" style="left:1104px;width:146px;color:#262626">I</div>
<div class="a" style="left:1250px;top:257px;width:1px;height:14px;background:#bdbdbd"></div>
<div class="colh" style="left:1250px;width:190px;color:#262626">J</div>
<div class="a" style="left:1440px;top:257px;width:1px;height:14px;background:#bdbdbd"></div>
<div class="colh" style="left:1440px;width:174px;color:#262626">K</div>
<div class="a" style="left:1614px;top:257px;width:1px;height:14px;background:#bdbdbd"></div>
<div class="colh" style="left:1614px;width:152px;color:#262626">L</div>
<div class="a" style="left:1766px;top:257px;width:1px;height:14px;background:#bdbdbd"></div>
<div class="colh" style="left:1766px;width:120px;color:#262626">M</div>
<div class="a" style="left:1886px;top:257px;width:1px;height:14px;background:#bdbdbd"></div>
<div class="a" style="left:0;top:271px;width:1895px;height:1px;background:#9b9b9b"></div>
<div class="a" style="left:0;top:271px;width:25px;height:703px;background:#e6e6e6"></div>
<div class="rowh" style="top:271px;height:18px;color:#262626">1</div>
<div class="a" style="left:0;top:289px;width:25px;height:1px;background:#bdbdbd"></div>
<div class="rowh" style="top:289px;height:65px;color:#262626">2</div>
<div class="a" style="left:0;top:354px;width:25px;height:1px;background:#bdbdbd"></div>
<div class="rowh" style="top:354px;height:33px;color:#262626">3</div>
<div class="a" style="left:0;top:387px;width:25px;height:1px;background:#bdbdbd"></div>
<div class="rowh" style="top:387px;height:18px;color:#262626">4</div>
<div class="a" style="left:0;top:405px;width:25px;height:1px;background:#bdbdbd"></div>
<div class="rowh" style="top:405px;height:20px;color:#262626">5</div>
<div class="a" style="left:0;top:425px;width:25px;height:1px;background:#bdbdbd"></div>
<div class="rowh" style="top:425px;height:28px;color:#262626">6</div>
<div class="a" style="left:0;top:453px;width:25px;height:1px;background:#bdbdbd"></div>
<div class="rowh" style="top:453px;height:28px;color:#262626">7</div>
<div class="a" style="left:0;top:481px;width:25px;height:1px;background:#bdbdbd"></div>
<div class="rowh" style="top:481px;height:28px;color:#262626">8</div>
<div class="a" style="left:0;top:509px;width:25px;height:1px;background:#bdbdbd"></div>
<div class="rowh" style="top:509px;height:28px;color:#262626">9</div>
<div class="a" style="left:0;top:537px;width:25px;height:1px;background:#bdbdbd"></div>
<div class="rowh" style="top:537px;height:18px;color:#262626">10</div>
<div class="a" style="left:0;top:555px;width:25px;height:1px;background:#bdbdbd"></div>
<div class="rowh" style="top:555px;height:32px;color:#262626">11</div>
<div class="a" style="left:0;top:587px;width:25px;height:1px;background:#bdbdbd"></div>
<div class="rowh" style="top:587px;height:20px;color:#262626">12</div>
<div class="a" style="left:0;top:607px;width:25px;height:1px;background:#bdbdbd"></div>
<div class="rowh" style="top:607px;height:117px;color:#262626">13</div>
<div class="a" style="left:0;top:724px;width:25px;height:1px;background:#bdbdbd"></div>
<div class="rowh" style="top:725px;height:54px;color:#262626">15</div>
<div class="a" style="left:0;top:779px;width:25px;height:1px;background:#bdbdbd"></div>
<div class="rowh" style="top:779px;height:53px;color:#262626">16</div>
<div class="a" style="left:0;top:832px;width:25px;height:1px;background:#bdbdbd"></div>
<div class="a" style="left:0;top:832px;width:25px;height:53px;background:#d2d2d2"></div>
<div class="a" style="left:23px;top:832px;width:2px;height:53px;background:#217346"></div>
<div class="rowh" style="top:832px;height:53px;color:#217346">17</div>
<div class="a" style="left:0;top:885px;width:25px;height:1px;background:#bdbdbd"></div>
<div class="rowh" style="top:885px;height:53px;color:#262626">18</div>
<div class="a" style="left:0;top:938px;width:25px;height:1px;background:#bdbdbd"></div>
<div class="rowh" style="top:938px;height:53px;color:#262626">19</div>
<div class="a" style="left:0;top:991px;width:25px;height:1px;background:#bdbdbd"></div>
<div class="a" style="left:0;top:724px;width:25px;height:1px;background:#a8a8a8"></div><div class="a" style="left:0;top:726px;width:47px;height:1px;background:#9b9b9b"></div>
<div class="a" style="left:25px;top:271px;width:1px;height:703px;background:#9b9b9b"></div>
<div class="a" style="left:26px;top:271px;width:1869px;height:703px;overflow:hidden">
<div class="a" style="left:67px;top:28px;width:21px;height:28px;border:1px solid #55628f"></div>
<div class="a" style="left:89px;top:28px;width:21px;height:28px;border:1px solid #55628f"></div>
<div class="a" style="left:111px;top:28px;width:21px;height:28px;border:1px solid #55628f"></div>
<div class="a" style="left:133px;top:28px;width:21px;height:28px;border:1px solid #55628f"></div>
<div class="t" style="left:62px;top:41px;font-size:27px;font-weight:bold;font-style:italic;color:#00338d;letter-spacing:-0.6px;transform:scaleX(1.08);transform-origin:left">KPMG</div>
<div class="t" style="left:61px;top:88px;font-size:16px;font-weight:bold;color:#0d2f8c">LeasingTool (IFRS 16)</div>
<div class="btn" style="left:334px;top:42px;width:172px;height:30px;font-size:16px;padding-left:0px;padding-top:2.5px">Menu</div>
<div class="btn" style="left:333px;top:78px;width:173px;height:30px;font-size:16px;padding-left:0px;padding-top:2.5px">Wyniki</div>
<div class="btn" style="left:510px;top:42px;width:208px;height:30px;font-size:16px;padding-left:0px;padding-top:2.5px">Harmonogram</div>
<div class="btn" style="left:510px;top:77px;width:208px;height:30px;font-size:16px;padding-left:0px;padding-top:2.5px">Dodaj umowy</div>
<div class="btn" style="left:510px;top:110px;width:208px;height:30px;font-size:16px;padding-left:0px;padding-top:2.5px">Parametry obliczeniowe</div>
<div class="btn" style="left:721px;top:42px;width:207px;height:30px;font-size:16px;padding-left:0px;padding-top:2.5px">Generuj harmonogram</div>
<div class="btn" style="left:721px;top:77px;width:207px;height:30px;font-size:16px;padding-left:0px;padding-top:2.5px">Waliduj umowy</div>
<div class="btn" style="left:721px;top:110px;width:209px;height:30px;font-size:14.7px;padding-left:0px;padding-top:2.5px">Archiwum harmonogramów</div>
<div class="btn" style="left:934px;top:41px;width:162px;height:31px;font-size:14.6px;padding-left:0px;padding-top:0px">Kalkulacja wstępna</div>
<div class="btn" style="left:1099px;top:42px;width:171px;height:30px;font-size:16px;padding-left:0px;padding-top:2.5px">Nowe umowy</div>
<div class="btn" style="left:1275px;top:40px;width:178px;height:31px;font-size:16px;padding-left:0px;padding-top:2.5px">Aktualizacja wyników</div>
<div class="btn" style="left:21px;top:223px;width:175px;height:29px;font-size:16px;padding-left:0px;padding-top:2.5px">Usuń wiersze</div>
<div class="t" style="left:1591px;top:269px;font-size:13px;color:#2b5fa8;text-decoration:underline">Idź do Przetwórz</div>
<div class="t" style="left:1591px;top:301px;font-size:13px;color:#2b5fa8;text-decoration:underline">Idź do Typ leasingu</div>
<div class="a" style="left:20px;top:336px;width:1848px;height:118px;background:#003399;border-top:1px solid #0a1f5c"></div>
<div class="hc" style="left:21px;top:342px;width:158px;height:110px">Wewnętrzny numer<br>umowy</div>
<div class="flt" style="left:158px;top:431px"></div>
<div class="a" style="left:21px;top:452px;width:158px;height:1px;background:#0a1a40"></div>
<div class="a" style="left:21px;top:453px;width:158px;height:2px;background:#f5f000"></div>
<div class="hc" style="left:179px;top:342px;width:205px;height:110px">Zewnętrzny numer umowy</div>
<div class="flt" style="left:363px;top:431px"></div>
<div class="a" style="left:179px;top:452px;width:205px;height:1px;background:#0a1a40"></div>
<div class="a" style="left:179px;top:453px;width:205px;height:2px;background:#f5f000"></div>
<div class="hc" style="left:384px;top:342px;width:133px;height:110px">Data rozpoczęcia<br>umowy</div>
<div class="flt" style="left:496px;top:431px"></div>
<div class="a" style="left:384px;top:454px;width:133px;height:1px;background:#eef2f8"></div>
<div class="hc" style="left:517px;top:342px;width:174px;height:110px">Rodzaj przedmiotu<br>leasingu</div>
<div class="flt" style="left:670px;top:431px"></div>
<div class="a" style="left:517px;top:454px;width:174px;height:1px;background:#eef2f8"></div>
<div class="hc" style="left:691px;top:342px;width:127px;height:110px">Przedmiot<br>leasingu</div>
<div class="flt" style="left:797px;top:431px"></div>
<div class="a" style="left:691px;top:454px;width:127px;height:1px;background:#eef2f8"></div>
<div class="hc" style="left:818px;top:342px;width:152px;height:110px">Nazwa leasingodawcy</div>
<div class="flt" style="left:949px;top:431px"></div>
<div class="a" style="left:818px;top:454px;width:152px;height:1px;background:#eef2f8"></div>
<div class="hc" style="left:970px;top:342px;width:108px;height:110px">Numer<br>wewnętrzny<br>leasingodawcy</div>
<div class="flt" style="left:1057px;top:431px"></div>
<div class="a" style="left:970px;top:454px;width:108px;height:1px;background:#eef2f8"></div>
<div class="hc" style="left:1078px;top:342px;width:146px;height:110px">Leasingobiorca</div>
<div class="flt" style="left:1203px;top:431px"></div>
<div class="a" style="left:1078px;top:454px;width:146px;height:1px;background:#eef2f8"></div>
<div class="hc" style="left:1224px;top:342px;width:190px;height:110px">Stopa oprocentowania na<br>dzień rozpoczęcia umowy<br>(formuła)</div>
<div class="flt" style="left:1393px;top:431px"></div>
<div class="a" style="left:1224px;top:454px;width:190px;height:1px;background:#eef2f8"></div>
<div class="hc" style="left:1414px;top:342px;width:174px;height:110px">Stopa oprocentowania na<br>dzień rozpoczęcia umowy<br>(suma)</div>
<div class="flt" style="left:1567px;top:431px"></div>
<div class="a" style="left:1414px;top:454px;width:174px;height:1px;background:#eef2f8"></div>
<div class="hc" style="left:1588px;top:342px;width:152px;height:110px">Data rozpoczęcia</div>
<div class="flt" style="left:1719px;top:431px"></div>
<div class="a" style="left:1588px;top:452px;width:152px;height:1px;background:#0a1a40"></div>
<div class="a" style="left:1588px;top:453px;width:152px;height:2px;background:#f5f000"></div>
<div class="hc" style="left:1740px;top:342px;width:120px;height:110px">Data zakończenia</div>
<div class="flt" style="left:1839px;top:431px"></div>
<div class="a" style="left:1740px;top:452px;width:128px;height:1px;background:#0a1a40"></div>
<div class="a" style="left:1740px;top:453px;width:128px;height:2px;background:#f5f000"></div>
<svg class="a" style="left:173px;top:337px" width="6" height="6" viewBox="0 0 6 6"><path d="M0 0h6v6z" fill="#e81123"/></svg>
<svg class="a" style="left:1734px;top:337px" width="6" height="6" viewBox="0 0 6 6"><path d="M0 0h6v6z" fill="#e81123"/></svg>
<svg class="a" style="left:1854px;top:337px" width="6" height="6" viewBox="0 0 6 6"><path d="M0 0h6v6z" fill="#e81123"/></svg>
<div class="a" style="left:1093px;top:454px;width:118px;height:1px;background:repeating-linear-gradient(90deg,#1a2550 0 2px,transparent 2px 6px)"></div>
<div class="a" style="left:21px;top:455px;width:1847px;height:265px;background:#d9d9d9"></div>
<div class="dc" style="left:21px;top:456px;width:158px;height:53px">WUG/23424</div>
<div class="dc" style="left:179px;top:456px;width:205px;height:53px">AKT 201/300</div>
<div class="dc" style="left:384px;top:456px;width:133px;height:53px">2014.01.31</div>
<div class="dc" style="left:517px;top:456px;width:174px;height:53px">Prawo wieczystego<br>użytkowania gruntu</div>
<div class="dc" style="left:691px;top:456px;width:127px;height:53px">DZIAŁKA 302/1</div>
<div class="dc" style="left:818px;top:456px;width:152px;height:53px">SKARB PAŃSTWA</div>
<div class="dc" style="left:970px;top:456px;width:108px;height:53px">0100023</div>
<div class="dc" style="left:1078px;top:456px;width:146px;height:53px">Ferton S.A.</div>
<div class="dc" style="left:1588px;top:456px;width:152px;height:53px">01.02.2023</div>
<div class="dc" style="left:1740px;top:456px;width:120px;height:53px">31.01.2113</div>
<div class="a" style="left:21px;top:508px;width:1847px;height:1px;background:#1f3b95"></div>
<svg class="a" style="left:971px;top:456px" width="7" height="7" viewBox="0 0 7 7"><path d="M0 0h7L0 7z" fill="#1a7a2a"/></svg>
<div class="dc" style="left:21px;top:509px;width:158px;height:53px">WUG/34343</div>
<div class="dc" style="left:179px;top:509px;width:205px;height:53px">AKT 205/307</div>
<div class="dc" style="left:384px;top:509px;width:133px;height:53px">2014.08.31</div>
<div class="dc" style="left:517px;top:509px;width:174px;height:53px">Prawo wieczystego<br>użytkowania gruntu</div>
<div class="dc" style="left:691px;top:509px;width:127px;height:53px">DZIAŁKA 302/2</div>
<div class="dc" style="left:818px;top:509px;width:152px;height:53px">SKARB PAŃSTWA</div>
<div class="dc" style="left:970px;top:509px;width:108px;height:53px">0100023</div>
<div class="dc" style="left:1078px;top:509px;width:146px;height:53px">Ferton S.A.</div>
<div class="dc" style="left:1588px;top:509px;width:152px;height:53px">01.02.2023</div>
<div class="dc" style="left:1740px;top:509px;width:120px;height:53px">31.08.2113</div>
<div class="a" style="left:21px;top:561px;width:1847px;height:1px;background:#1f3b95"></div>
<svg class="a" style="left:971px;top:509px" width="7" height="7" viewBox="0 0 7 7"><path d="M0 0h7L0 7z" fill="#1a7a2a"/></svg>
<div class="dc" style="left:21px;top:562px;width:158px;height:53px">WUG/34721</div>
<div class="dc" style="left:179px;top:562px;width:205px;height:53px">AKT 3372/2015</div>
<div class="dc" style="left:384px;top:562px;width:133px;height:53px">2014.08.31</div>
<div class="dc" style="left:517px;top:562px;width:174px;height:53px">Prawo wieczystego<br>użytkowania gruntu</div>
<div class="dc" style="left:691px;top:562px;width:127px;height:53px">DZIAŁKA 107/3</div>
<div class="dc" style="left:818px;top:562px;width:152px;height:53px">SKARB PAŃSTWA</div>
<div class="dc" style="left:970px;top:562px;width:108px;height:53px">0100023</div>
<div class="dc" style="left:1078px;top:562px;width:146px;height:53px">Ferton S.A.</div>
<div class="dc" style="left:1588px;top:562px;width:152px;height:53px">01.01.2019</div>
<div class="dc" style="left:1740px;top:562px;width:120px;height:53px">31.08.2113</div>
<div class="a" style="left:21px;top:614px;width:1847px;height:1px;background:#1f3b95"></div>
<svg class="a" style="left:971px;top:562px" width="7" height="7" viewBox="0 0 7 7"><path d="M0 0h7L0 7z" fill="#1a7a2a"/></svg>
<div class="dc" style="left:21px;top:615px;width:158px;height:53px">WU 34326</div>
<div class="dc" style="left:179px;top:615px;width:205px;height:53px">CARFLEET 1</div>
<div class="dc" style="left:384px;top:615px;width:133px;height:53px">2014.08.31</div>
<div class="dc" style="left:517px;top:615px;width:174px;height:53px">Pojazdy</div>
<div class="dc" style="left:691px;top:615px;width:127px;height:53px">Samochód osobowy</div>
<div class="dc" style="left:818px;top:615px;width:152px;height:53px">Carfleet Management</div>
<div class="dc" style="left:970px;top:615px;width:108px;height:53px">0200020</div>
<div class="dc" style="left:1078px;top:615px;width:146px;height:53px">Ferton S.A.</div>
<div class="dc" style="left:1588px;top:615px;width:152px;height:53px">01.02.2023</div>
<div class="dc" style="left:1740px;top:615px;width:120px;height:53px">31.01.2026</div>
<div class="a" style="left:21px;top:667px;width:1847px;height:1px;background:#1f3b95"></div>
<svg class="a" style="left:971px;top:615px" width="7" height="7" viewBox="0 0 7 7"><path d="M0 0h7L0 7z" fill="#1a7a2a"/></svg>
<div class="dc" style="left:21px;top:668px;width:158px;height:53px">WU 34327</div>
<div class="dc" style="left:179px;top:668px;width:205px;height:53px">CARFLEET 1</div>
<div class="dc" style="left:384px;top:668px;width:133px;height:53px">2014.08.31</div>
<div class="dc" style="left:517px;top:668px;width:174px;height:53px">Pojazdy</div>
<div class="dc" style="left:691px;top:668px;width:127px;height:53px">Samochód osobowy</div>
<div class="dc" style="left:818px;top:668px;width:152px;height:53px">Carfleet Management</div>
<div class="dc" style="left:970px;top:668px;width:108px;height:53px">0200020</div>
<div class="dc" style="left:1078px;top:668px;width:146px;height:53px">Ferton S.A.</div>
<div class="dc" style="left:1588px;top:668px;width:152px;height:53px">01.02.2023</div>
<div class="dc" style="left:1740px;top:668px;width:120px;height:53px">31.01.2026</div>
<div class="a" style="left:21px;top:720px;width:1847px;height:1px;background:#1f3b95"></div>
<svg class="a" style="left:971px;top:668px" width="7" height="7" viewBox="0 0 7 7"><path d="M0 0h7L0 7z" fill="#1a7a2a"/></svg>
<div class="a" style="left:179px;top:455px;width:1px;height:265px;background:#1f3b95"></div>
<div class="a" style="left:384px;top:455px;width:1px;height:265px;background:#1f3b95"></div>
<div class="a" style="left:517px;top:455px;width:1px;height:265px;background:#1f3b95"></div>
<div class="a" style="left:691px;top:455px;width:1px;height:265px;background:#1f3b95"></div>
<div class="a" style="left:818px;top:455px;width:1px;height:265px;background:#1f3b95"></div>
<div class="a" style="left:970px;top:455px;width:1px;height:265px;background:#1f3b95"></div>
<div class="a" style="left:1078px;top:455px;width:1px;height:265px;background:#1f3b95"></div>
<div class="a" style="left:1224px;top:455px;width:1px;height:265px;background:#1f3b95"></div>
<div class="a" style="left:1414px;top:455px;width:1px;height:265px;background:#1f3b95"></div>
<div class="a" style="left:1588px;top:455px;width:1px;height:265px;background:#1f3b95"></div>
<div class="a" style="left:1740px;top:455px;width:1px;height:265px;background:#1f3b95"></div>
<div class="a" style="left:1860px;top:455px;width:1px;height:265px;background:#1f3b95"></div>
<div class="a" style="left:21px;top:455px;width:1px;height:265px;background:#1f3b95"></div>
<div class="a" style="left:1868px;top:0px;width:1px;height:703px;background:#9b9b9b"></div>
<div class="a" style="left:384px;top:0px;width:1px;height:703px;background:#8f8f8f"></div>
<div class="a" style="left:383px;top:560px;width:135px;height:55px;border:2px solid #217346"></div>
<div class="a" style="left:514px;top:611px;width:5px;height:5px;background:#217346;border:1px solid #fff"></div>
</div>
<div class="a" style="left:1895px;top:253px;width:25px;height:721px;background:#e6e6e6"></div>
<div class="a" style="left:1898px;top:257px;width:19px;height:19px;background:#fff;border:1px solid #c8c8c8"></div>
<svg class="a" style="left:1903px;top:263px" width="9" height="6" viewBox="0 0 9 6"><path d="M0 5.5h9L4.5 0.5z" fill="#606060"/></svg>
<div class="a" style="left:1898px;top:276px;width:19px;height:678px;background:#dcdcdc"></div>
<div class="a" style="left:1898px;top:276px;width:19px;height:21px;background:#fff;border:1px solid #c8c8c8"></div>
<div class="a" style="left:1898px;top:954px;width:19px;height:19px;background:#fff;border:1px solid #c8c8c8"></div>
<svg class="a" style="left:1903px;top:961px" width="9" height="6" viewBox="0 0 9 6"><path d="M0 0.5h9L4.5 5.5z" fill="#606060"/></svg>

<div class="a" style="left:0;top:974px;width:1920px;height:29px;background:#e6e6e6;border-top:1px solid #c8c8c8"></div>
<svg class="a" style="left:27px;top:984px" width="8" height="10" viewBox="0 0 8 10"><path d="M7 0v10L1 5z" fill="#b4b4b4"/></svg>
<svg class="a" style="left:56px;top:984px" width="8" height="10" viewBox="0 0 8 10"><path d="M1 0v10l6-5z" fill="#b4b4b4"/></svg>
<div class="a" style="left:103px;top:979px;width:1px;height:20px;background:#bdbdbd"></div>
<div class="a" style="left:106px;top:977px;width:64px;height:23px;background:#003399"></div>
<div class="t" style="left:115px;top:977px;font-size:17px;color:#fff">Menu</div>
<div class="a" style="left:172px;top:974px;width:159px;height:26px;background:linear-gradient(#ffffff 0%,#f4f6fa 45%,#b9c4dc 100%);border-left:1px solid #cfd6e4;border-right:1px solid #cfd6e4;border-bottom:2px solid #217346"></div>
<div class="t" style="left:185px;top:978px;font-size:16.7px;font-weight:bold;color:#217346">Contract register</div>
<div class="a" style="left:0;top:1002px;width:1920px;height:1px;background:#d4d4d4"></div>
<svg class="a" style="left:364px;top:978px" width="22" height="22" viewBox="0 0 22 22" fill="none" stroke="#6b6b6b" stroke-width="1.4"><circle cx="11" cy="11" r="9.5"/><path d="M11 5.5v11M5.5 11h11"/></svg>
<div class="a" style="left:1149px;top:982px;width:3px;height:3px;background:#b4b4b4"></div>
<div class="a" style="left:1149px;top:987px;width:3px;height:3px;background:#b4b4b4"></div>
<div class="a" style="left:1149px;top:992px;width:3px;height:3px;background:#b4b4b4"></div>
<div class="a" style="left:1167px;top:979px;width:726px;height:19px;background:#d9d9d9"></div>
<div class="a" style="left:1167px;top:979px;width:19px;height:19px;background:#fff;border:1px solid #c8c8c8"></div>
<svg class="a" style="left:1173px;top:984px" width="6" height="9" viewBox="0 0 6 9"><path d="M5.5 0v9L0.5 4.5z" fill="#606060"/></svg>
<div class="a" style="left:1185px;top:979px;width:85px;height:19px;background:#fff;border:1px solid #c8c8c8"></div>
<div class="a" style="left:1874px;top:979px;width:19px;height:19px;background:#fff;border:1px solid #c8c8c8"></div>
<svg class="a" style="left:1881px;top:984px" width="6" height="9" viewBox="0 0 6 9"><path d="M0.5 0v9L5.5 4.5z" fill="#606060"/></svg>

<div class="a" style="left:0;top:1003px;width:1920px;height:27px;background:#f3f2f1"></div>
<div class="t" style="left:9px;top:1011px;font-size:12.5px;color:#444">Ready</div>
<svg class="a" style="left:69px;top:1009px" width="20" height="17" viewBox="0 0 20 17" fill="none" stroke="#555" stroke-width="1.2"><rect x="1" y="1" width="16" height="13"/><path d="M1 4h16M4 7h3M4 10h3"/><circle cx="13" cy="11" r="4.5" fill="#f3f2f1"/><circle cx="13" cy="11" r="2" fill="#555"/></svg>
<div class="a" style="left:1555px;top:1003px;width:50px;height:27px;background:#d2d0ce"></div>
<svg class="a" style="left:1571px;top:1008px" width="17" height="17" viewBox="0 0 17 17" fill="none" stroke="#444" stroke-width="1.3"><rect x="1" y="1" width="15" height="15"/><path d="M6 1v15M11 1v15M1 6h15M1 11h15"/></svg>
<svg class="a" style="left:1621px;top:1008px" width="18" height="17" viewBox="0 0 18 17" fill="none" stroke="#444" stroke-width="1.3"><rect x="1" y="1" width="16" height="15"/><rect x="4" y="4" width="10" height="9"/><path d="M6 7h6M6 10h6"/></svg>
<svg class="a" style="left:1671px;top:1008px" width="18" height="17" viewBox="0 0 18 17" fill="none" stroke="#444" stroke-width="1.3"><rect x="1" y="1" width="16" height="15"/><path d="M6 1v8h6V1M1 9h5M12 9h5"/></svg>
<div class="a" style="left:1711px;top:1016px;width:10px;height:1.3px;background:#444"></div>
<div class="a" style="left:1729px;top:1016px;width:124px;height:1px;background:#a0a0a0"></div>
<div class="a" style="left:1775px;top:1009px;width:6px;height:15px;background:#707070"></div>
<div class="a" style="left:1790px;top:1012px;width:1px;height:8px;background:#a0a0a0"></div>
<div class="a" style="left:1859px;top:1016px;width:10px;height:1.3px;background:#444"></div>
<div class="a" style="left:1863.4px;top:1011px;width:1.3px;height:11px;background:#444"></div>
<div class="t" style="left:1885px;top:1011px;font-size:12.5px;color:#444">80%</div>

</body></html>
